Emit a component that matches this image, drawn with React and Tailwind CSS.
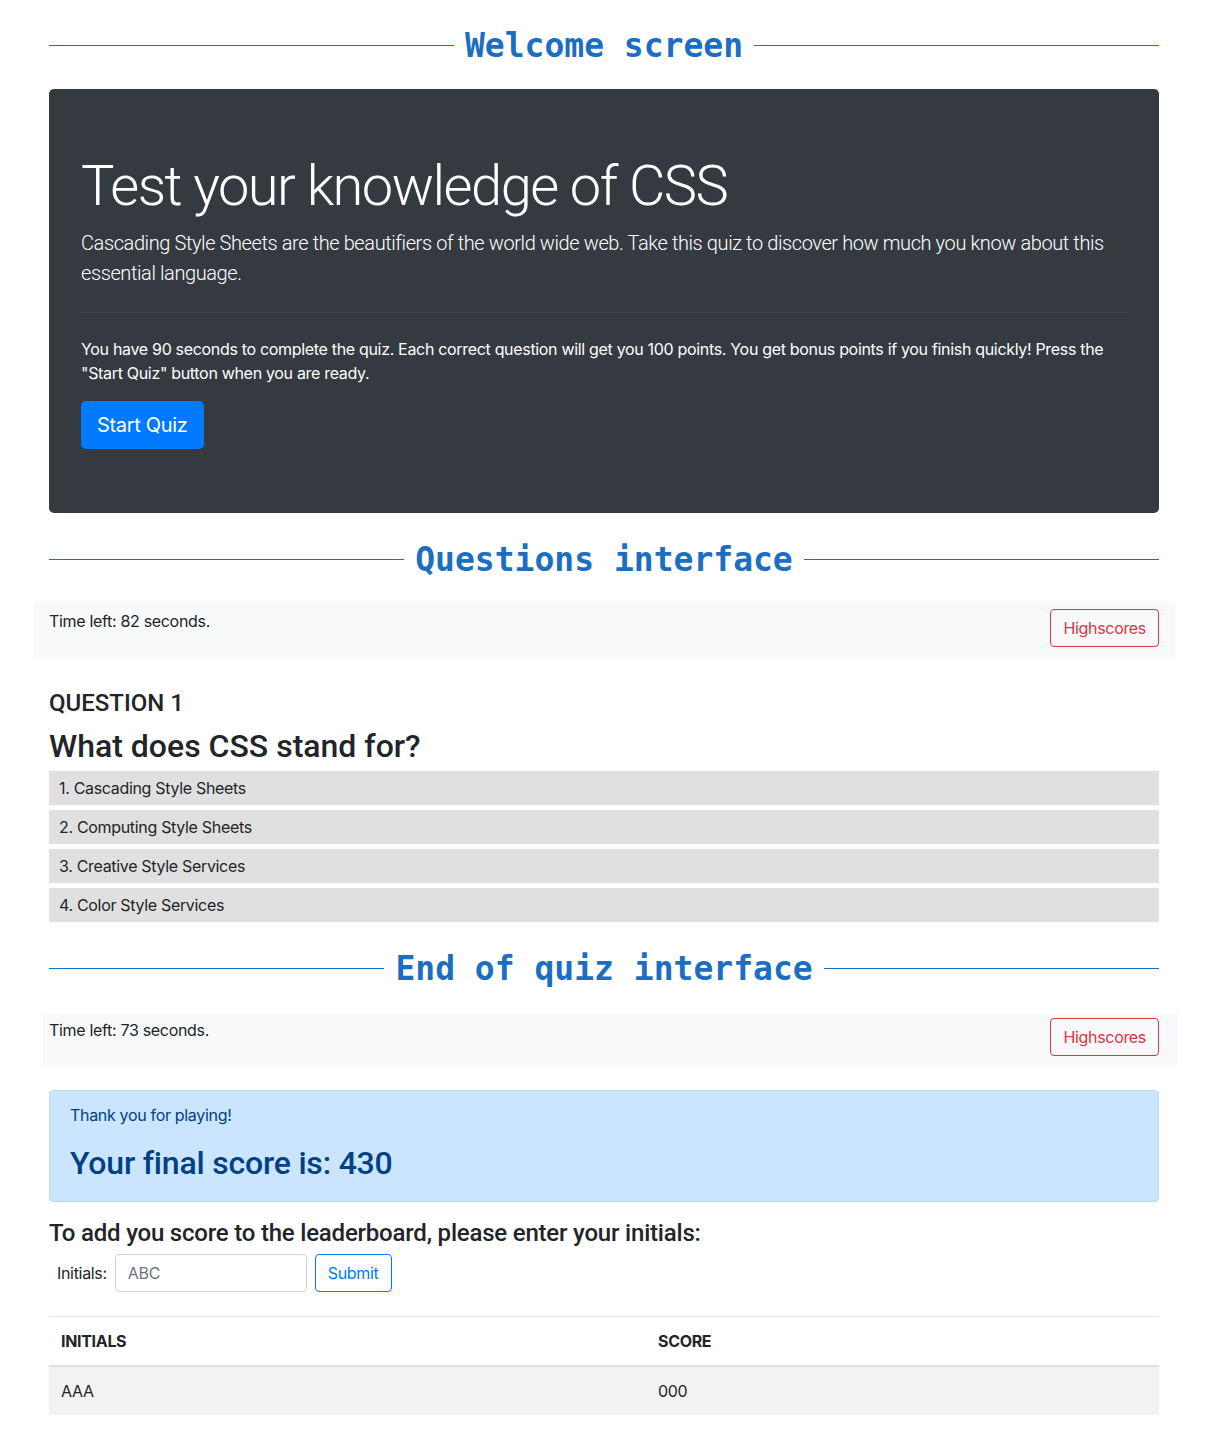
import React from 'react'

const sans = "font-['Inter','Noto_Sans',sans-serif] tracking-[-0.02em]"
const display = "font-['Roboto','Inter',sans-serif]"

function SectionTitle({ children }) {
  return (
    <div className="flex items-center gap-[11px] h-[46px] tracking-normal">
      <div className="flex-1 h-px bg-[#1b6ec2]" />
      <h2 className="font-['DejaVu_Sans_Mono',monospace] font-bold text-[33px] leading-none text-[#1b6ec2] whitespace-nowrap">
        {children}
      </h2>
      <div className="flex-1 h-px bg-[#1b6ec2]" />
    </div>
  )
}

function TimerBar({ seconds, className }) {
  return (
    <div className={`flex items-start justify-between bg-[#f8f9fa] ${className}`}>
      <span className="text-base leading-6 text-[#212529]">Time left: {seconds} seconds.</span>
      <button className="h-[38px] px-3 rounded border border-[#dc3545] text-[#dc3545] text-base bg-transparent">
        Highscores
      </button>
    </div>
  )
}

const options = [
  '1. Cascading Style Sheets',
  '2. Computing Style Sheets',
  '3. Creative Style Services',
  '4. Color Style Services',
]

export default function App() {
  return (
    <div className={`${sans} text-[#212529] bg-white min-h-[1439px]`}>
      <div className="w-[1110px] ml-[49px] pt-[22px]">
        <SectionTitle>Welcome screen</SectionTitle>

        <div className="mt-[21px] bg-[#343a40] rounded-[5px] px-8 pt-16 pb-16 text-white">
          <h1 className={`${display} text-[56px] font-light leading-[1.2] tracking-[-1.5px]`}>Test your knowledge of CSS</h1>
          <p className={`${display} text-xl font-light leading-[30px] mt-2 tracking-[-0.4px]`}>
            Cascading Style Sheets are the beautifiers of the world wide web. Take this quiz to discover how much you know about this essential language.
          </p>
          <hr className="my-6 border-t border-[#3d434a]" />
          <p className="text-base leading-6 mb-4">
            You have 90 seconds to complete the quiz. Each correct question will get you 100 points. You get bonus points if you finish quickly! Press the "Start Quiz" button when you are ready.
          </p>
          <button className="h-12 px-4 rounded-[5px] bg-[#007bff] text-white text-xl">Start Quiz</button>
        </div>

        <div className="mt-[23px]">
          <SectionTitle>Questions interface</SectionTitle>
        </div>

        <TimerBar seconds={82} className="mt-[20px] -ml-[15px] -mr-[16px] h-[55px] pl-[15px] pr-[16px] pt-[7px]" />

        <div className="mt-[32px]">
          <div className={`${display} text-2xl font-medium leading-[29px] tracking-normal`}>QUESTION 1</div>
          <div className={`${display} text-[32px] font-medium leading-[38px] mt-[9px] tracking-normal`}>What does CSS stand for?</div>
          <div className="mt-[6px] flex flex-col gap-[5px]">
            {options.map(o => (
              <div key={o} className="h-[34px] bg-[#e1e0e0] px-[10px] flex items-center text-base">
                {o}
              </div>
            ))}
          </div>
        </div>

        <div className="mt-[23px]">
          <SectionTitle>End of quiz interface</SectionTitle>
        </div>

        <TimerBar seconds={73} className="mt-[22px] -ml-[6px] -mr-[19px] h-[52px] pl-[6px] pr-[19px] pt-[5px]" />

        <div className="mt-[25px] bg-[#cce5ff] border border-[#b8daff] rounded text-[#004085] px-5 pt-3 pb-[19px]">
          <p className="text-base leading-6 mb-[17px]">Thank you for playing!</p>
          <div className={`${display} text-[32px] font-medium leading-[38px] tracking-[-0.2px]`}>Your final score is: 430</div>
        </div>

        <div className={`${display} mt-[17px] text-2xl font-medium leading-[29px] tracking-[-0.2px]`}>
          To add you score to the leaderboard, please enter your initials:
        </div>
        <div className="mt-[6px] flex items-center pl-2 gap-2">
          <span className="text-base">Initials:</span>
          <input
            placeholder="ABC"
            className="w-[192px] h-[38px] border border-[#ced4da] rounded px-3 text-base placeholder:text-[#6c757d] outline-none"
          />
          <button className="h-[38px] px-3 rounded border border-[#007bff] text-[#007bff] text-base">Submit</button>
        </div>

        <table className="mt-6 w-full border-collapse text-base">
          <thead>
            <tr className="border-t border-[#dee2e6] border-b-2 border-b-[#dee2e6]">
              <th className="w-[597px] text-left font-bold uppercase p-3 leading-6 text-base">Initials</th>
              <th className="text-left font-bold uppercase p-3 leading-6 text-base">Score</th>
            </tr>
          </thead>
          <tbody>
            <tr className="bg-[#f2f2f2]">
              <td className="px-3 py-3 leading-6">AAA</td>
              <td className="px-3 py-3 leading-6">000</td>
            </tr>
          </tbody>
        </table>
      </div>
    </div>
  )
}
